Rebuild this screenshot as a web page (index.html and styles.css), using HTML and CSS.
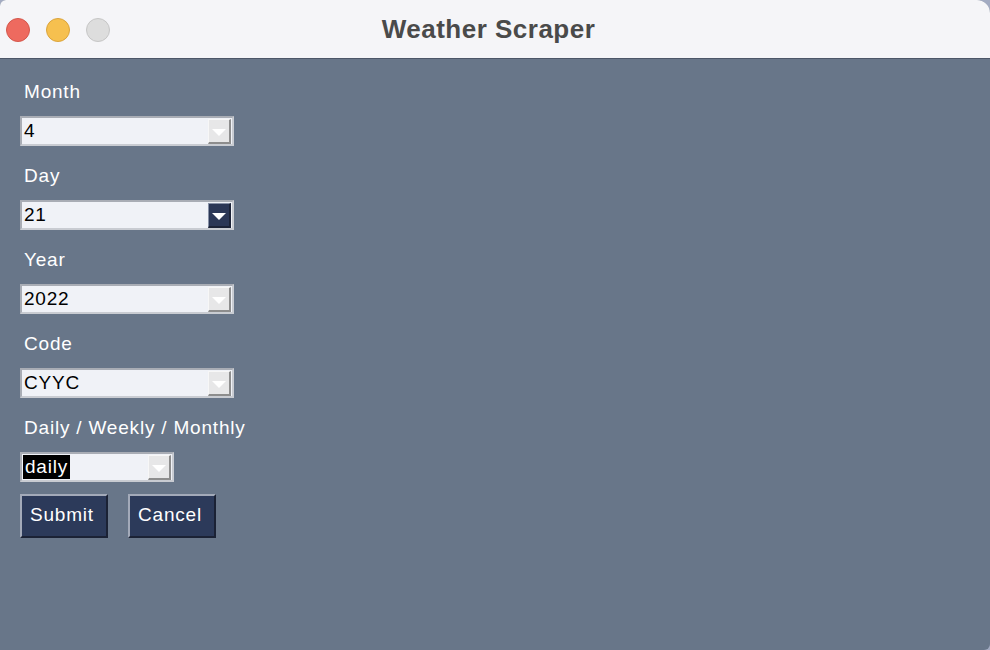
FILE: index.html
```html
<!DOCTYPE html>
<html lang="en">
<head>
<meta charset="utf-8">
<title>Weather Scraper</title>
<link rel="stylesheet" href="styles.css">
</head>
<body>
<div class="window">
  <header class="titlebar">
    <div class="lights">
      <span class="light red"></span>
      <span class="light yellow"></span>
      <span class="light gray"></span>
    </div>
    <h1 class="title">Weather Scraper</h1>
    <div></div>
  </header>
  <main class="content">
    <div class="field">
      <div class="label">Month</div>
      <div class="combo"><span class="value">4</span><span class="arrow"></span></div>
    </div>
    <div class="field">
      <div class="label">Day</div>
      <div class="combo"><span class="value">21</span><span class="arrow active"></span></div>
    </div>
    <div class="field">
      <div class="label">Year</div>
      <div class="combo"><span class="value">2022</span><span class="arrow"></span></div>
    </div>
    <div class="field">
      <div class="label">Code</div>
      <div class="combo"><span class="value">CYYC</span><span class="arrow"></span></div>
    </div>
    <div class="field last">
      <div class="label">Daily / Weekly / Monthly</div>
      <div class="combo narrow"><span class="value selected">daily</span><span class="arrow"></span></div>
    </div>
    <div class="buttons">
      <button class="btn">Submit</button>
      <button class="btn">Cancel</button>
    </div>
  </main>
</div>
</body>
</html>
```
FILE: styles.css
```css
* { box-sizing: border-box; }
html, body { margin: 0; padding: 0; }
body {
  background: #a3abc2;
  width: 990px;
  height: 650px;
  overflow: hidden;
  font-family: "Liberation Sans", Arial, sans-serif;
}
.window {
  width: 990px;
  height: 650px;
  border-radius: 6px 13px 6px 0;
  overflow: hidden;
  background: #687689;
  display: flex;
  flex-direction: column;
}
.titlebar {
  height: 59px;
  background: #f5f5f8;
  border-bottom: 1px solid #4c5668;
  display: grid;
  grid-template-columns: 1fr auto 1fr;
  align-items: center;
  padding-right: 13px;
  flex: none;
}
.lights {
  display: flex;
  gap: 16px;
  padding-left: 6px;
  padding-top: 2px;
}
.light {
  width: 24px;
  height: 24px;
  border-radius: 50%;
  border: 1px solid;
}
.light.red { background: #ee6a5f; border-color: #d4574c; }
.light.yellow { background: #f6c04f; border-color: #dba43c; }
.light.gray { background: #dddddd; border-color: #c6c6c6; }
.title {
  margin: 0;
  font-size: 26px;
  font-weight: bold;
  letter-spacing: 0.5px;
  color: #4a4a4a;
  padding-top: 1px;
}
.content {
  padding: 21px 0 0 20px;
  display: flex;
  flex-direction: column;
  align-items: flex-start;
}
.field {
  display: flex;
  flex-direction: column;
  align-items: flex-start;
  margin-bottom: 18px;
}
.field.last { margin-bottom: 12px; }
.label {
  color: #ffffff;
  font-size: 19px;
  line-height: 24px;
  letter-spacing: 0.8px;
  padding-left: 4px;
  margin-bottom: 12px;
}
.combo {
  width: 214px;
  height: 30px;
  border: 2px solid;
  border-color: #a9adb5 #c9ccd2 #c9ccd2 #a9adb5;
  background: #f0f2f7;
  padding: 1px 1px 0 1px;
  display: flex;
  justify-content: space-between;
  align-items: flex-start;
}
.combo.narrow { width: 154px; }
.value {
  font-size: 19px;
  line-height: 24px;
  letter-spacing: 0.8px;
  color: #000000;
  padding: 0 2px 0 1px;
}
.value.selected {
  background: #000000;
  color: #ffffff;
  padding: 0 2px;
}
.arrow {
  width: 23px;
  height: 25px;
  background: #e7e7e8;
  border-top: 1px solid #f7f7f7;
  border-left: 1px solid #f7f7f7;
  border-right: 2px solid #8d8d8d;
  border-bottom: 2px solid #8d8d8d;
  display: flex;
  align-items: center;
  justify-content: center;
}
.arrow::after {
  content: "";
  width: 0;
  height: 0;
  border-left: 7px solid transparent;
  border-right: 7px solid transparent;
  border-top: 7px solid #ffffff;
  margin-top: 2px;
}
.arrow.active {
  background: #2b3756;
  border-top-color: #8891a6;
  border-left-color: #8891a6;
  border-right-color: #1c2337;
  border-bottom-color: #1c2337;
}
.buttons {
  display: flex;
  gap: 20px;
}
.btn {
  width: 88px;
  height: 44px;
  background: #2c3a5a;
  color: #ffffff;
  font-family: "Liberation Sans", Arial, sans-serif;
  font-size: 19px;
  letter-spacing: 0.8px;
  text-align: left;
  padding: 0 0 2px 8px;
  border: 2px solid;
  border-color: #a3aab9 #1b2235 #1b2235 #a3aab9;
  cursor: default;
}
```
